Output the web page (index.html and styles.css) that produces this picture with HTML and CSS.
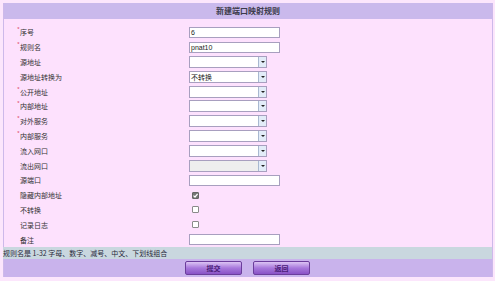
FILE: index.html
```html
<!DOCTYPE html>
<html>
<head>
<meta charset="utf-8">
<link rel="stylesheet" href="styles.css">
</head>
<body>
<div class="panel">
  <div class="header">新建端口映射规则</div>
  <div class="form">
    <div class="row"><div class="label"><span class="star">*</span>序号</div><div class="field"><div class="input">6</div></div></div>
    <div class="row"><div class="label"><span class="star">*</span>规则名</div><div class="field"><div class="input">pnat10</div></div></div>
    <div class="row"><div class="label"><span class="star"></span>源地址</div><div class="field"><div class="select"><span class="val"></span><span class="arrow"></span></div></div></div>
    <div class="row"><div class="label"><span class="star"></span>源地址转换为</div><div class="field"><div class="select"><span class="val">不转换</span><span class="arrow"></span></div></div></div>
    <div class="row"><div class="label"><span class="star">*</span>公开地址</div><div class="field"><div class="select"><span class="val"></span><span class="arrow"></span></div></div></div>
    <div class="row"><div class="label"><span class="star">*</span>内部地址</div><div class="field"><div class="select"><span class="val"></span><span class="arrow"></span></div></div></div>
    <div class="row"><div class="label"><span class="star">*</span>对外服务</div><div class="field"><div class="select"><span class="val"></span><span class="arrow"></span></div></div></div>
    <div class="row"><div class="label"><span class="star">*</span>内部服务</div><div class="field"><div class="select"><span class="val"></span><span class="arrow"></span></div></div></div>
    <div class="row"><div class="label"><span class="star"></span>流入网口</div><div class="field"><div class="select"><span class="val"></span><span class="arrow"></span></div></div></div>
    <div class="row"><div class="label"><span class="star"></span>流出网口</div><div class="field"><div class="select disabled"><span class="val"></span><span class="arrow"></span></div></div></div>
    <div class="row"><div class="label"><span class="star"></span>源端口</div><div class="field"><div class="input"></div></div></div>
    <div class="row"><div class="label"><span class="star"></span>隐藏内部地址</div><div class="field"><span class="check checked"><svg viewBox="0 0 7 7" width="7" height="7"><path d="M1.5 3.6 L3 5 L5.6 1.8" fill="none" stroke="#fff" stroke-width="1.2"/></svg></span></div></div>
    <div class="row"><div class="label"><span class="star"></span>不转换</div><div class="field"><span class="check"></span></div></div>
    <div class="row"><div class="label"><span class="star"></span>记录日志</div><div class="field"><span class="check"></span></div></div>
    <div class="row"><div class="label"><span class="star"></span>备注</div><div class="field"><div class="input"></div></div></div>
  </div>
  <div class="hint">规则名是 1-32 字母、数字、减号、中文、下划线组合</div>
  <div class="buttons">
    <div class="btn">提交</div>
    <div class="btn">返回</div>
  </div>
</div>
</body>
</html>
```
FILE: styles.css
```css
html, body {
  margin: 0;
  padding: 0;
  background: #fce6fc;
  font-family: "Noto Sans CJK SC", "Liberation Sans", sans-serif;
}
.panel {
  margin: 3px 0 0 3px;
  width: 488px;
  border-left: 1px solid #cdb9ea;
  border-right: 1px solid #cdb9ea;
}
.header {
  height: 16px;
  line-height: 16px;
  background: #cab9ec;
  text-align: center;
  font-size: 8px;
  font-weight: bold;
  color: #3a3a4a;
}
.form {
  background: #fde1fd;
  padding-top: 6px;
}
.row {
  display: flex;
  align-items: center;
  height: 14.8px;
}
.label {
  width: 185px;
  padding-left: 13px;
  box-sizing: border-box;
  font-size: 7px;
  color: #333;
  display: flex;
  align-items: center;
}
.star {
  display: inline-block;
  width: 3px;
  color: #e0506a;
  font-size: 6px;
  line-height: 6px;
  align-self: flex-start;
}
.field {
  display: flex;
  align-items: center;
}
.input {
  width: 91px;
  height: 11px;
  box-sizing: border-box;
  border: 1px solid #a89fbf;
  background: #fff;
  font-size: 7px;
  line-height: 9px;
  padding-left: 1px;
  color: #222;
  font-family: "Liberation Sans", "Noto Sans CJK SC", sans-serif;
}
.select {
  width: 78px;
  height: 12px;
  box-sizing: border-box;
  border: 1px solid #a89fbf;
  background: #fff;
  display: flex;
}
.select.disabled {
  background: #eeeeee;
}
.select .val {
  flex: 1;
  font-size: 7px;
  line-height: 10px;
  padding-left: 1px;
  color: #222;
}
.select .arrow {
  width: 7px;
  background: #e2ecf8;
  border-left: 1px solid #a8b8d0;
  display: flex;
  align-items: center;
  justify-content: center;
}
.select .arrow::after {
  content: "";
  border-left: 2px solid transparent;
  border-right: 2px solid transparent;
  border-top: 2px solid #222;
}
.check {
  margin-left: 3px;
  width: 7px;
  height: 7px;
  box-sizing: border-box;
  border: 1px solid #8a8a8a;
  border-radius: 1px;
  background: #fff;
  display: flex;
}
.check svg {
  display: block;
  margin: -1px;
}
.check.checked {
  background: #767676;
  border-color: #666;
}
.hint {
  height: 12px;
  line-height: 12px;
  background: #c9d7df;
  font-size: 7px;
  color: #2a2a3a;
  padding-left: 0;
  margin-left: -1px;
}
.buttons {
  height: 18px;
  background: #c9b3ec;
  display: flex;
  align-items: center;
  gap: 11px;
  padding-left: 181px;
}
.btn {
  width: 57px;
  height: 14px;
  box-sizing: border-box;
  border: 1px solid #6b3d9b;
  border-radius: 2px;
  background: linear-gradient(#dcc4f4, #a878dc 50%, #8a52c6);
  font-size: 7px;
  font-weight: bold;
  color: #4a1c78;
  text-align: center;
  line-height: 12px;
}
```
